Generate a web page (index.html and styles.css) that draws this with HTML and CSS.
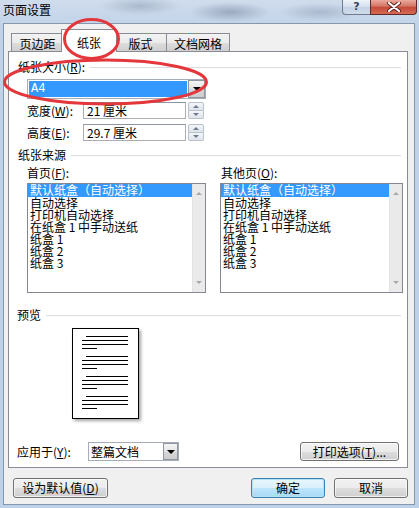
FILE: index.html
```html
<!DOCTYPE html>
<html lang="zh-CN">
<head>
<meta charset="utf-8">
<title>页面设置</title>
<link rel="stylesheet" href="styles.css">
</head>
<body>
<div class="window">
  <div class="titlebar">
    <span class="title">页面设置</span>
    <div class="caption">
      <div class="cap-help">?</div>
      <div class="cap-close"><svg width="14" height="10" viewBox="0 0 14 10"><path d="M2 1 L12 9 M12 1 L2 9" stroke="#5a2020" stroke-width="4" stroke-linecap="round"/><path d="M2 1 L12 9 M12 1 L2 9" stroke="#fff" stroke-width="2.2" stroke-linecap="round"/></svg></div>
    </div>
  </div>
  <div class="client">
    <div class="tabs">
      <div class="tab w1">页边距</div>
      <div class="tab w2 active">纸张</div>
      <div class="tab w3">版式</div>
      <div class="tab w4">文档网格</div>
    </div>
    <div class="panel">
      <div class="group-head g1"><span>纸张大小(<u>R</u>):</span><i></i></div>
      <div class="combo size-combo">
        <div class="combo-field"><span class="sel">A4</span></div>
        <div class="combo-btn"><b class="tri-down"></b></div>
      </div>
      <div class="dim-row r1">
        <span class="dim-label">宽度(<u>W</u>):</span>
        <div class="edit">21 厘米</div>
        <div class="spin"><span class="up"><b class="tri-up-s"></b></span><span class="dn"><b class="tri-down-s"></b></span></div>
      </div>
      <div class="dim-row r2">
        <span class="dim-label">高度(<u>E</u>):</span>
        <div class="edit">29.7 厘米</div>
        <div class="spin"><span class="up"><b class="tri-up-s"></b></span><span class="dn"><b class="tri-down-s"></b></span></div>
      </div>
      <div class="group-head g2"><span>纸张来源</span><i></i></div>
      <div class="sources">
        <div class="src-col c1">
          <div class="src-label">首页(<u>F</u>):</div>
          <div class="listbox">
            <ul class="items">
              <li class="sel">默认纸盒（自动选择）</li>
              <li>自动选择</li>
              <li>打印机自动选择</li>
              <li>在纸盒 1 中手动送纸</li>
              <li>纸盒 1</li>
              <li>纸盒 2</li>
              <li>纸盒 3</li>
            </ul>
            <div class="vscroll"><b class="tri-up-g"></b><b class="tri-down-g"></b></div>
          </div>
        </div>
        <div class="src-col c2">
          <div class="src-label">其他页(<u>O</u>):</div>
          <div class="listbox">
            <ul class="items">
              <li class="sel">默认纸盒（自动选择）</li>
              <li>自动选择</li>
              <li>打印机自动选择</li>
              <li>在纸盒 1 中手动送纸</li>
              <li>纸盒 1</li>
              <li>纸盒 2</li>
              <li>纸盒 3</li>
            </ul>
            <div class="vscroll"><b class="tri-up-g"></b><b class="tri-down-g"></b></div>
          </div>
        </div>
      </div>
      <div class="group-head g3"><span>预览</span><i></i></div>
      <div class="page">
        <div class="para"><i class="ln first"></i><i class="ln"></i><i class="ln"></i><i class="ln last"></i></div>
        <div class="para"><i class="ln first"></i><i class="ln"></i><i class="ln"></i><i class="ln last"></i></div>
        <div class="para"><i class="ln first"></i><i class="ln"></i><i class="ln"></i><i class="ln last"></i></div>
        <div class="para"><i class="ln first"></i><i class="ln"></i><i class="ln"></i><i class="ln last"></i></div>
      </div>
      <div class="apply-row">
        <span class="apply-label">应用于(<u>Y</u>):</span>
        <div class="combo apply-combo">
          <div class="combo-field plain">整篇文档</div>
          <div class="combo-btn"><b class="tri-down"></b></div>
        </div>
        <div class="btn print-btn">打印选项(<u>T</u>)...</div>
      </div>
    </div>
    <div class="footer">
      <div class="btn default-btn">设为默认值(<u>D</u>)</div>
      <div class="btn ok-btn">确定</div>
      <div class="btn cancel-btn">取消</div>
    </div>
  </div>
  <svg class="marks" width="419" height="508" viewBox="0 0 419 508">
    <ellipse cx="91.5" cy="39" rx="27" ry="19.5" fill="none" stroke="#e3373c" stroke-width="3"/>
    <ellipse cx="105.5" cy="82" rx="101" ry="22" fill="none" stroke="#e3373c" stroke-width="3"/>
  </svg>
</div>
</body>
</html>
```

FILE: styles.css
```css
* { box-sizing: border-box; }
html, body { margin: 0; padding: 0; }
body {
  width: 419px;
  height: 508px;
  overflow: hidden;
  font-family: "Noto Sans CJK SC", "Liberation Sans", sans-serif;
  font-size: 12px;
  color: #000;
  background: #c1d4ea;
}
u { text-decoration: underline; text-underline-offset: 1px; }

.window {
  position: relative;
  width: 419px;
  height: 508px;
  display: flex;
  flex-direction: column;
  background:
    radial-gradient(ellipse 40px 9px at 140px 6px, rgba(110,125,150,.35), transparent),
    radial-gradient(ellipse 40px 10px at 230px 12px, rgba(70,85,110,.35), transparent),
    radial-gradient(ellipse 40px 9px at 320px 12px, rgba(80,95,120,.25), transparent),
    linear-gradient(#cfdcec, #bfd2e8 30px, #bdd1e9);
}

.titlebar {
  height: 23px;
  display: flex;
  justify-content: space-between;
  align-items: flex-start;
}
.title {
  margin: 3px 0 0 3px;
  line-height: 14px;
  font-size: 12px;
}
.caption {
  display: flex;
  margin-right: 2px;
}
.cap-help {
  width: 28px;
  height: 15px;
  border: 1px solid #6d7c90;
  border-top: none;
  border-right: none;
  border-radius: 0 0 0 4px;
  background: linear-gradient(#eef3f9, #d4dfec 50%, #c3d2e4 51%, #d0dcea);
  color: #34445a;
  font-family: "DejaVu Sans", sans-serif;
  font-size: 11px;
  font-weight: bold;
  line-height: 14px;
  text-align: center;
}
.cap-close {
  width: 47px;
  height: 15px;
  border: 1px solid #5d2a28;
  border-top: none;
  border-radius: 0 0 4px 0;
  background: linear-gradient(#e9a99c, #d47566 45%, #c4483a 50%, #d56a52);
  display: flex;
  align-items: center;
  justify-content: center;
}

.client {
  margin-left: 3px;
  width: 412px;
  height: 482px;
  border: 1px solid #8597ad;
  background: #f0f0f0;
  padding: 5px 0 0 4px;
  display: flex;
  flex-direction: column;
}

.tabs {
  display: flex;
  align-items: flex-end;
  height: 22px;
  margin-left: 3px;
  position: relative;
  z-index: 2;
}
.tab {
  height: 18px;
  border: 1px solid #898c95;
  border-bottom: none;
  margin-left: -1px;
  background: linear-gradient(#f3f3f3, #ebebeb 50%, #dddddd 51%, #cfcfcf);
  text-align: center;
  line-height: 17px;
  padding-top: 1px;
}
.tab.w1 { width: 53px; margin-left: 0; }
.tab.w2 { width: 52px; }
.tab.w3 { width: 53px; }
.tab.w4 { width: 64px; }
.tab.active {
  height: 23px;
  margin: 0 -2px -1px -3px;
  width: 56px;
  background: #fff;
  padding-top: 4px;
  position: relative;
  z-index: 3;
}

.panel {
  width: 400px;
  height: 417px;
  background: #fff;
  border: 1px solid #898c95;
  position: relative;
  z-index: 1;
  padding: 0;
}

.group-head {
  display: flex;
  align-items: center;
  height: 14px;
  margin-left: 9px;
  margin-right: 6px;
  line-height: 14px;
}
.group-head span { white-space: nowrap; }
.group-head i {
  flex: 1;
  height: 1px;
  background: #dcdcdc;
  margin-left: 5px;
}
.g1 { margin-top: 8px; }
.g2 { margin-top: 7px; }
.g3 { margin-top: 15px; margin-left: 8px; }

.combo {
  display: flex;
  border: 1px solid #a5acb5;
  background: #fff;
}
.size-combo {
  margin: 5px 0 0 18px;
  width: 179px;
  height: 20px;
}
.combo-field {
  flex: 1;
  padding: 1px 1px;
  display: flex;
}
.combo-field .sel {
  flex: 1;
  background: #3399ff;
  color: #fff;
  line-height: 14px;
  padding-left: 2px;
  font-family: "Liberation Mono", monospace;
  font-size: 12px;
  height: 16px;
  padding-top: 1px;
}
.combo-field.plain {
  line-height: 16px;
  padding-left: 2px;
}
.combo-btn {
  width: 17px;
  border: 1px solid #8f96a0;
  margin: 0;
  background: linear-gradient(#f5f5f5, #e3e3e3 50%, #d6d6d6 51%, #cdcdcd);
  display: flex;
  align-items: center;
  justify-content: center;
}
.tri-down {
  width: 0; height: 0;
  border-left: 4px solid transparent;
  border-right: 4px solid transparent;
  border-top: 4px solid #000;
}

.dim-row {
  display: flex;
  align-items: center;
  margin-left: 18px;
  height: 17px;
}
.r1 { margin-top: 3px; }
.r2 { margin-top: 5px; }
.dim-label { width: 56px; line-height: 14px; }
.edit {
  width: 103px;
  height: 17px;
  border: 1px solid #abadb3;
  border-top-color: #8f95a0;
  padding-left: 3px;
  line-height: 15px;
}
.spin {
  margin-left: 2px;
  width: 16px;
  height: 17px;
  display: flex;
  flex-direction: column;
}
.spin span {
  flex: 1;
  border: 1px solid #b9c1cc;
  background: linear-gradient(#f4f6f9, #dfe4eb);
  display: flex;
  align-items: center;
  justify-content: center;
}
.spin .up { border-radius: 2px 2px 0 0; }
.spin .dn { border-top: none; border-radius: 0 0 2px 2px; }
.tri-up-s {
  width: 0; height: 0;
  border-left: 3px solid transparent;
  border-right: 3px solid transparent;
  border-bottom: 3px solid #6c7a8c;
}
.tri-down-s {
  width: 0; height: 0;
  border-left: 3px solid transparent;
  border-right: 3px solid transparent;
  border-top: 3px solid #6c7a8c;
}

.sources {
  display: flex;
  margin-left: 18px;
  margin-top: 4px;
  gap: 14px;
}
.src-label { line-height: 14px; height: 14px; }
.c2 .src-label { margin-left: 1px; }
.listbox {
  margin-top: 3px;
  height: 110px;
  border: 1px solid #828790;
  display: flex;
  background: #fff;
}
.c1 .listbox { width: 179px; }
.c2 .listbox { width: 183px; }
.items {
  list-style: none;
  margin: 0;
  padding: 0;
  flex: 1;
}
.items li {
  height: 12px;
  line-height: 12px;
  padding-left: 2px;
  white-space: nowrap;
}
.items li.sel {
  background: #3399ff;
  color: #fff;
  height: 13px;
}
.vscroll {
  width: 13px;
  background: #eaeaea;
  border-left: 1px solid #e2e2e2;
  display: flex;
  flex-direction: column;
  justify-content: space-between;
  align-items: center;
  padding: 8px 0 8px;
}
.tri-up-g {
  width: 0; height: 0;
  border-left: 3px solid transparent;
  border-right: 3px solid transparent;
  border-bottom: 3px solid #a8a8a8;
}
.tri-down-g {
  width: 0; height: 0;
  border-left: 3px solid transparent;
  border-right: 3px solid transparent;
  border-top: 3px solid #a8a8a8;
}

.page {
  margin: 6px 0 0 63px;
  width: 67px;
  height: 91px;
  border: 1px solid #000;
  background: #fff;
  box-shadow: 2px 2px 3px rgba(0,0,0,.35);
  padding: 7px 0 0 9px;
}
.para {
  display: flex;
  flex-direction: column;
  gap: 3px;
  height: 20px;
}
.ln {
  display: block;
  width: 46px;
  height: 1px;
  background: #000;
}
.ln.first { margin-left: 4px; width: 42px; }
.ln.last { width: 15px; }

.apply-row {
  display: flex;
  align-items: center;
  margin: 23px 0 0 8px;
  height: 19px;
}
.apply-label { width: 71px; line-height: 14px; }
.apply-combo {
  width: 91px;
  height: 19px;
  border-color: #a5acb5;
}
.apply-combo .combo-btn { width: 15px; }
.print-btn {
  margin-left: auto;
  margin-right: 8px;
  width: 99px;
  height: 19px;
}

.btn {
  border: 1px solid #707070;
  border-radius: 3px;
  background: linear-gradient(#f2f2f2, #ebebeb 50%, #dddddd 51%, #cfcfcf);
  box-shadow: inset 0 0 0 1px rgba(255,255,255,.7);
  text-align: center;
  line-height: 17px;
  white-space: nowrap;
}

.footer {
  display: flex;
  margin-top: 10px;
  height: 20px;
}
.default-btn { width: 95px; margin-left: 5px; height: 20px; line-height: 18px; }
.ok-btn {
  width: 74px;
  height: 20px;
  line-height: 18px;
  margin-left: auto;
  border-color: #3c7fb1;
  box-shadow: inset 0 0 0 1px #b5e0f5;
  background: linear-gradient(#eaf6fd, #d9f0fc 50%, #bee6fd 51%, #a7d9f5);
}
.cancel-btn { width: 74px; height: 20px; line-height: 18px; margin-left: 9px; margin-right: 6px; }

.marks {
  position: absolute;
  left: 0;
  top: 0;
  pointer-events: none;
  z-index: 10;
}
```
